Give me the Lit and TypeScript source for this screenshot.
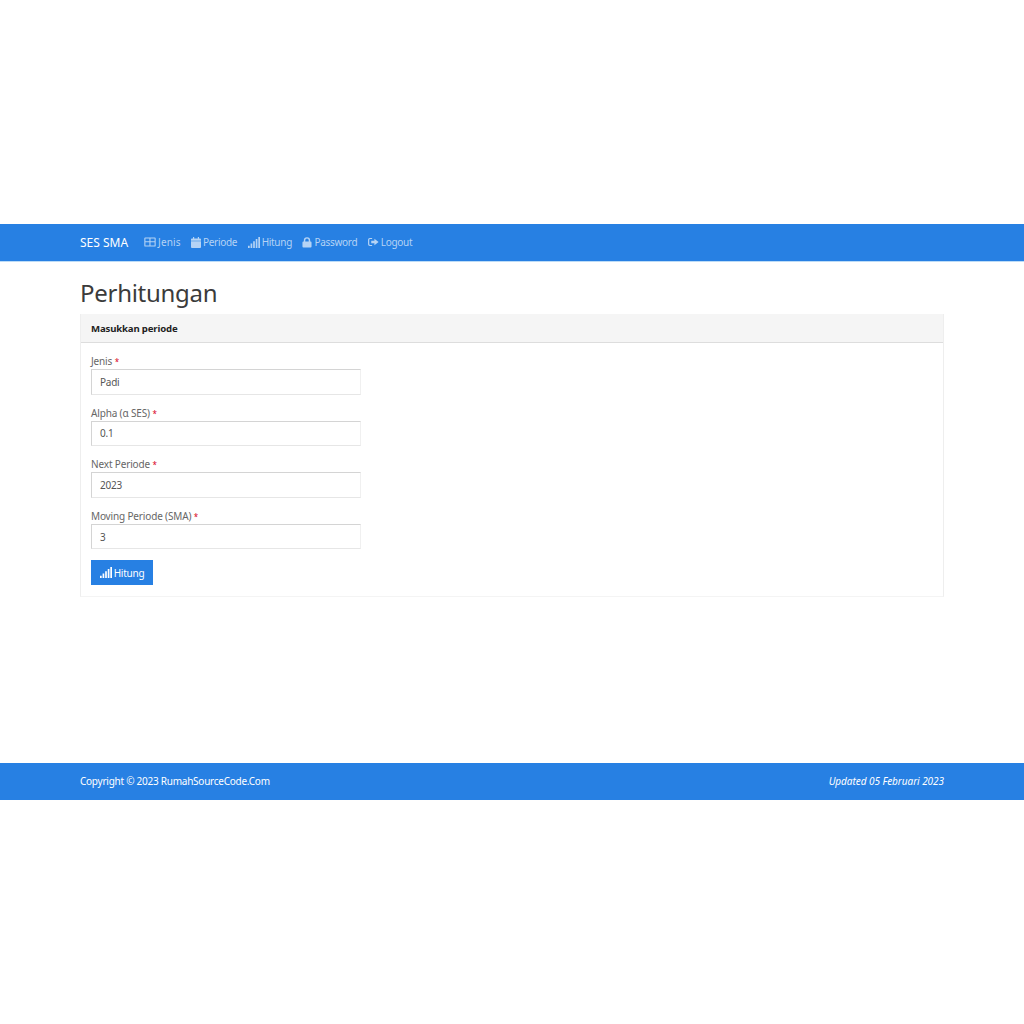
import { LitElement, html, css, svg } from "lit";
import { customElement } from "lit/decorators.js";

const icons: Record<string, unknown> = {
  table: svg`<path d="M0 1.5A1 1 0 0 1 1 .5h10.5a1 1 0 0 1 1 1v8a1 1 0 0 1-1 1H1a1 1 0 0 1-1-1zM1.2 1.7v3h4.4v-3zm5.6 0v3h4.5v-3zM1.2 5.9v3.4h4.4V5.9zm5.6 0v3.4h4.5V5.9z" fill-rule="evenodd"/>`,
  calendar: svg`<path d="M2.2 0h1.3v1.5h4V0h1.3v1.5H10a1 1 0 0 1 1 1V4H0V2.5a1 1 0 0 1 1-1h1.2zM0 4.7h11V11a1 1 0 0 1-1 1H1a1 1 0 0 1-1-1z"/>`,
  signal: svg`<path d="M0 8.7h1.7V11H0zM2.6 6.6h1.7V11H2.6zM5.2 4.3h1.7V11H5.2zM7.8 2h1.7v9H7.8zM10.4 0h1.7v11h-1.7z"/>`,
  lock: svg`<path d="M2 5V3.6a3.5 3.5 0 0 1 7 0V5h.5a1 1 0 0 1 1 1v4.5a1 1 0 0 1-1 1h-8a1 1 0 0 1-1-1V6a1 1 0 0 1 1-1zm1.6 0h3.8V3.6a1.9 1.9 0 0 0-3.8 0z" fill-rule="evenodd"/>`,
  logout: svg`<path d="M4.5 1H2a2 2 0 0 0-2 2v5a2 2 0 0 0 2 2h2.5V8.7H2.2a.9.9 0 0 1-.9-.9V3.2a.9.9 0 0 1 .9-.9h2.3zM7 1.8l4.6 3.7L7 9.2V7H3.5V4H7z"/>`,
};

const icon = (name: string, w: number, h: number, vb: string) =>
  html`<svg class="icon" width=${w} height=${h} viewBox=${vb} fill="currentColor" aria-hidden="true">${icons[name]}</svg>`;

const navItems: [string, string, number, number, string][] = [
  ["table", "Jenis", 12, 10, "0 0 12.5 11"],
  ["calendar", "Periode", 10, 11, "0 0 11 12"],
  ["signal", "Hitung", 12, 11, "0 0 12.1 11"],
  ["lock", "Password", 10, 11, "0 0 11 12"],
  ["logout", "Logout", 11, 10, "0 0 12 11"],
];

const fields: [string, string][] = [
  ["Jenis", "Padi"],
  ["Alpha (α SES)", "0.1"],
  ["Next Periode", "2023"],
  ["Moving Periode (SMA)", "3"],
];

@customElement("app-root")
export class AppRoot extends LitElement {
  static styles = css`
    :host {
      display: block;
      padding-top: 224px;
      background: #fff;
      font-family: "Noto Sans", "Open Sans", sans-serif;
      font-size: 10px;
      letter-spacing: -0.25px;
      color: #333;
    }
    .container { width: 864px; margin: 0 auto; }
    .nav {
      height: 37px;
      background: #2780e3;
      box-shadow: 0 1px 0 #bcdcf7;
    }
    .nav .container { display: flex; align-items: center; height: 100%; padding-bottom: 1px; box-sizing: border-box; }
    .brand { color: #fff; font-size: 12px; letter-spacing: 0; margin-right: 16px; }
    .links { display: flex; gap: 10.5px; }
    .link { display: flex; align-items: center; gap: 2px; color: #b5d3f5; letter-spacing: -0.3px; }
    .link:first-child { letter-spacing: 0.1px; }
    .icon { flex: none; display: block; }
    h1 {
      margin: 0;
      padding-top: 17px;
      height: 36px;
      line-height: 30px;
      font-size: 24px;
      letter-spacing: -0.28px;
      font-weight: 400;
      color: #3b3b3b;
      box-sizing: content-box;
    }
    .panel {
      border: 1px solid #eee;
      border-top: 0;
      border-bottom-color: #f4f4f4;
      height: 283px;
      box-sizing: border-box;
    }
    .head {
      height: 29px;
      display: flex;
      align-items: center;
      padding-left: 10px;
      background: #f5f5f5;
      border-bottom: 1px solid #ddd;
      font-weight: 700;
      font-size: 9.6px;
      letter-spacing: -0.15px;
      color: #222;
      box-sizing: border-box;
    }
    .body { padding: 11px 10px; display: flex; flex-direction: column; gap: 11px; }
    .field { display: flex; flex-direction: column; }
    label { height: 15px; line-height: 15px; color: #666; letter-spacing: -0.15px; }
    .req { color: #d9001b; font-size: 8px; }
    .input {
      width: 270px;
      height: 25.6px;
      box-sizing: border-box;
      border: 1px solid #d4d4d4;
      border-bottom-color: #e6e6e6;
      border-right-color: #f0f0f0;
      padding-left: 8px;
      display: flex;
      align-items: center;
      color: #555;
    }
    .btn {
      width: 62px;
      height: 25px;
      background: #2780e3;
      color: #fff;
      display: flex;
      align-items: center;
      justify-content: center;
      gap: 2px;
    }
    .footer {
      margin-top: 166px;
      height: 37px;
      background: #2780e3;
      color: #fff;
    }
    .footer .container {
      height: 100%;
      display: flex;
      align-items: center;
      justify-content: space-between;
      padding-bottom: 1px;
      box-sizing: border-box;
    }
    .updated { font-style: italic; letter-spacing: -0.05px; }
    .spacer { height: 224px; }
  `;

  render() {
    return html`
      <div class="nav">
        <div class="container">
          <span class="brand">SES SMA</span>
          <div class="links">
            ${navItems.map(
              ([n, t, w, h, vb]) => html`<span class="link">${icon(n, w, h, vb)}${t}</span>`
            )}
          </div>
        </div>
      </div>
      <div class="container">
        <h1>Perhitungan</h1>
        <div class="panel">
          <div class="head">Masukkan periode</div>
          <div class="body">
            ${fields.map(
              ([l, v]) => html`<div class="field">
                <label>${l} <span class="req">*</span></label>
                <div class="input">${v}</div>
              </div>`
            )}
            <div class="btn">${icon("signal", 12, 11, "0 0 12.1 11")}Hitung</div>
          </div>
        </div>
      </div>
      <div class="footer">
        <div class="container">
          <span>Copyright © 2023 RumahSourceCode.Com</span>
          <span class="updated">Updated 05 Februari 2023</span>
        </div>
      </div>
      <div class="spacer"></div>
    `;
  }
}
